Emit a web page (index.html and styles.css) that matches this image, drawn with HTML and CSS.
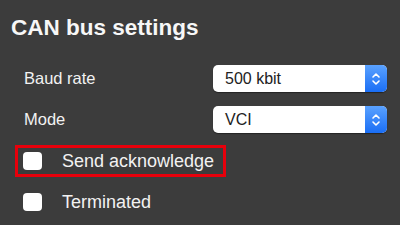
FILE: index.html
```html
<!DOCTYPE html>
<html lang="en">
<head>
  <meta charset="UTF-8" />
  <title>CAN bus settings</title>
  <link rel="stylesheet" href="styles.css">
</head>
<body>

<div class="panel">
  <h2 class="title">CAN bus settings</h2>

  <div class="field">
    <span class="label">Baud rate</span>
    <div class="select">
      <span class="value">500 kbit</span>
      <span class="stepper">
        <svg width="10" height="16" viewBox="0 0 10 16"><path d="M2 6 L5 3 L8 6 M2 10 L5 13 L8 10" fill="none" stroke="#fff" stroke-width="1.6" stroke-linecap="round" stroke-linejoin="round"/></svg>
      </span>
    </div>
  </div>

  <div class="field">
    <span class="label">Mode</span>
    <div class="select">
      <span class="value">VCI</span>
      <span class="stepper">
        <svg width="10" height="16" viewBox="0 0 10 16"><path d="M2 6 L5 3 L8 6 M2 10 L5 13 L8 10" fill="none" stroke="#fff" stroke-width="1.6" stroke-linecap="round" stroke-linejoin="round"/></svg>
      </span>
    </div>
  </div>

  <div class="check highlight">
    <span class="box"></span>
    <span class="check-label">Send acknowledge</span>
  </div>

  <div class="check">
    <span class="box"></span>
    <span class="check-label">Terminated</span>
  </div>
</div>

</body>
</html>
```

FILE: styles.css
```css
* {
  margin: 0;
  padding: 0;
  box-sizing: border-box;
}

body {
  background: #3c3c3c;
  font-family: "Liberation Sans", Arial, sans-serif;
  color: #f2f2f2;
  width: 400px;
  height: 225px;
  overflow: hidden;
}

.panel {
  padding: 15px 0 0 11px;
}

.title {
  font-size: 22.5px;
  font-weight: bold;
  color: #f7f7f7;
  height: 36px;
  margin-bottom: 14px;
}

.field {
  display: flex;
  align-items: center;
  height: 27px;
  margin-bottom: 14px;
  padding-left: 13px;
}

.label {
  font-size: 16.5px;
  width: 189px;
}

.select {
  display: flex;
  width: 174px;
  height: 27px;
  background: #fff;
  border-radius: 5px;
  overflow: hidden;
  box-shadow: 0 1px 1px rgba(0,0,0,0.4);
}

.value {
  flex: 1;
  color: #222;
  font-size: 16px;
  padding-left: 12px;
  line-height: 27px;
}

.stepper {
  width: 22px;
  background: linear-gradient(#5aa2ff, #1a6ef5);
  display: flex;
  align-items: center;
  justify-content: center;
}

.check {
  display: flex;
  align-items: center;
  width: 211px;
  height: 32px;
  margin-left: 4px;
  padding-left: 5px;
  margin-bottom: 9px;
  border: 3px solid transparent;
}

.highlight {
  border-color: #e8000b;
  margin-top: -2px;
}

.box {
  width: 19px;
  height: 18px;
  background: #fff;
  border-radius: 4px;
  margin-right: 20px;
}

.check-label {
  font-size: 18px;
}
```
